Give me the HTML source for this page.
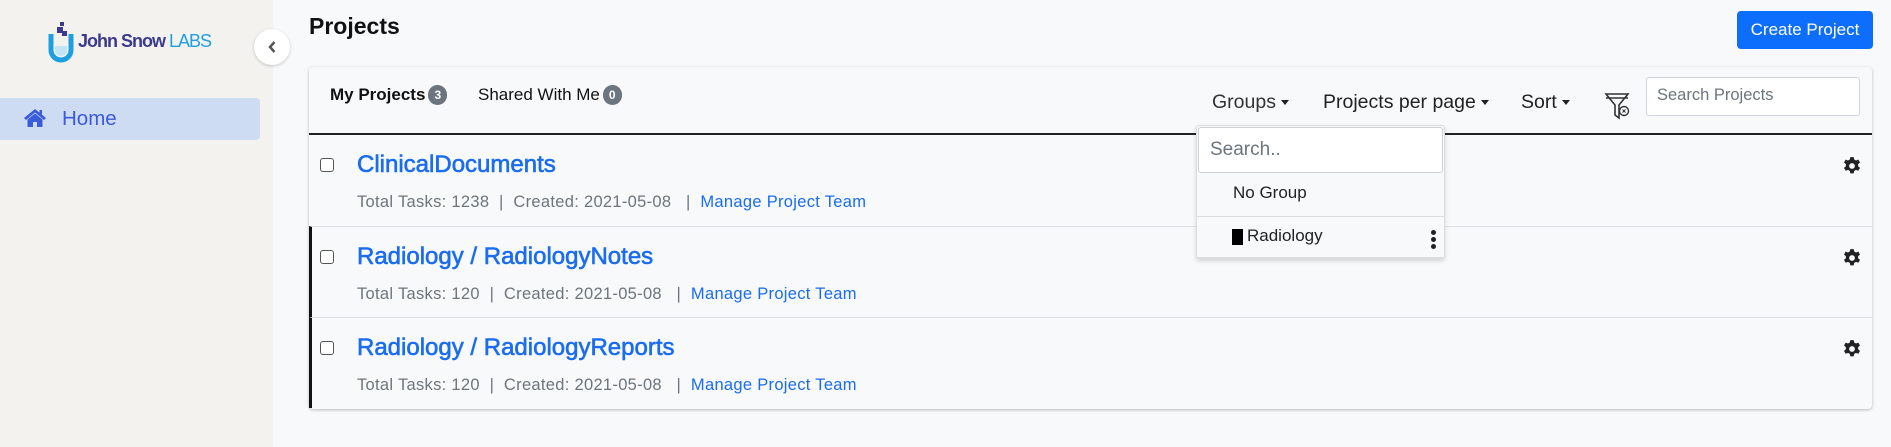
<!DOCTYPE html>
<html><head><style>
*{box-sizing:border-box;margin:0;padding:0}
body{width:1891px;height:447px;background:#f8f9fb;font-family:"Liberation Sans",sans-serif;position:relative;overflow:hidden}
.side{position:absolute;left:0;top:0;width:273px;height:447px;background:#f3f2ef}
.abs{position:absolute;white-space:nowrap}
.card{position:absolute;left:309px;top:67px;width:1563px;height:342px;background:#f8f9fa;border-radius:4px;box-shadow:0 1px 3px rgba(0,0,0,.25)}
.row{position:absolute;left:0;width:1563px;height:91px;border-top:1px solid #dee2e6}
.badge{display:inline-block;background:#6c757d;color:#fff;font-size:12px;font-weight:bold;border-radius:10px;padding:3px 6px;vertical-align:1px;margin-left:3px}
.cb{position:absolute;left:11px;top:23px;width:14px;height:14px;border:1px solid #555;border-radius:3px;background:#fff}
.title{position:absolute;left:48px;top:16px;font-size:24px;color:#1a6cf0;font-weight:normal;-webkit-text-stroke:0.6px #1a6cf0}
.meta{position:absolute;left:48px;top:58px;font-size:16.5px;color:#6c757d;letter-spacing:0.3px}
.meta a{color:#1a6cf0;text-decoration:none}
.gear{position:absolute;left:1533px;top:21px}
.caret{display:inline-block;border-left:4px solid transparent;border-right:4px solid transparent;border-top:5px solid #222;vertical-align:3px;margin-left:5px}
</style></head><body>
<div class="side">
<svg class="abs" style="left:48px;top:22px" width="26" height="41" viewBox="0 0 26 41"><rect x="12" y="0" width="4" height="4" fill="#3b3a8c"/><rect x="9" y="5" width="6" height="6" fill="#3b3a8c"/><rect x="14" y="9" width="5" height="5" fill="#3b3a8c"/><path d="M3 12 V28 a10 10 0 0 0 20 0 V12" fill="none" stroke="#1e9fe0" stroke-width="5"/><path d="M7 24 h12 v4 a6 6 0 0 1 -12 0z" fill="#bfe5f7"/></svg>
<div class="abs" style="left:78px;top:31px;font-size:18px;font-weight:bold;color:#3b3a8c;letter-spacing:-1px">John Snow <span style="color:#1e9fe0;font-weight:normal">LABS</span></div>
<div class="abs" style="left:0;top:98px;width:260px;height:42px;background:#cddcf2;border-radius:0 4px 4px 0"></div>
<svg class="abs" style="left:23px;top:108px" width="24" height="20" viewBox="0 0 24 20"><path d="M12 1 L1 10 L3 12 L12 4.5 L21 12 L23 10 L19 6.7 V2 H16.5 V4.6Z" fill="#3b5bdb"/><path d="M4.5 11.5 L12 5.5 L19.5 11.5 V19 H14 V14 H10 V19 H4.5Z" fill="#3b5bdb"/></svg>
<div class="abs" style="left:62px;top:107px;font-size:20.5px;color:#3b5bdb">Home</div>
</div>
<div class="abs" style="left:254px;top:29px;width:36px;height:36px;border-radius:50%;background:#fff;box-shadow:0 1px 3px rgba(0,0,0,.2)"></div>
<svg class="abs" style="left:267px;top:40px" width="10" height="14" viewBox="0 0 10 14"><path d="M7.5 2 L3 7 L7.5 12" fill="none" stroke="#555" stroke-width="2.5"/></svg>
<div class="abs" style="left:309px;top:13px;font-size:23px;font-weight:bold;color:#111">Projects</div>
<div class="abs" style="left:1737px;top:11px;width:136px;height:38px;background:#0d6efd;border-radius:4px;color:#fff;font-size:17px;text-align:center;line-height:38px">Create Project</div>
<div class="card">
<div class="abs" style="left:21px;top:18px;font-size:17px;font-weight:bold;color:#111">My Projects<span class="badge">3</span></div>
<div class="abs" style="left:169px;top:18px;font-size:17px;color:#111">Shared With Me<span class="badge">0</span></div>
<div class="abs" style="left:903px;top:24px;font-size:19.5px;color:#333">Groups<span class="caret"></span></div>
<div class="abs" style="left:1014px;top:24px;font-size:19.5px;color:#222">Projects per page<span class="caret"></span></div>
<div class="abs" style="left:1212px;top:24px;font-size:19.5px;color:#222">Sort<span class="caret"></span></div>
<svg class="abs" style="left:1295px;top:24px" width="28" height="30" viewBox="0 0 28 30"><path d="M2 3 H24 L15 14 V27 L11 24 V14Z M2 7 H24" fill="none" stroke="#333" stroke-width="1.6"/><circle cx="20" cy="20" r="4.5" fill="#fff" stroke="#333" stroke-width="1.4"/><path d="M18.5 18.5 l3 3 m0 -3 l-3 3" stroke="#333" stroke-width="1"/></svg>
<div class="abs" style="left:1337px;top:10px;width:214px;height:39px;background:#fff;border:1px solid #ced4da;border-radius:3px;font-size:16.5px;color:#6c757d;padding:8px 10px">Search Projects</div>
<div class="abs" style="left:0;top:66px;width:1563px;height:2px;background:#222"></div>
<div class="row" style="top:68px;border-top:none">
<div class="cb"></div><div class="title">ClinicalDocuments</div>
<div class="meta">Total Tasks: 1238 &nbsp;| &nbsp;Created: 2021-05-08 &nbsp; | &nbsp;<a>Manage Project Team</a></div>
<svg class="gear" width="20" height="20" viewBox="0 0 18 18"><path d="M7.5 1h3l.5 2.2 1.6.9 2.1-.8 1.5 2.6-1.7 1.5v1.8l1.7 1.5-1.5 2.6-2.1-.8-1.6.9-.5 2.2h-3l-.5-2.2-1.6-.9-2.1.8-1.5-2.6 1.7-1.5V7.4L1.8 5.9l1.5-2.6 2.1.8L7 3.2Z" fill="#222"/><circle cx="9" cy="9" r="2.6" fill="#f8f9fa"/></svg>
</div>
<div class="row" style="top:159px;border-left:3px solid #111">
<div class="cb" style="left:8px"></div><div class="title" style="left:45px">Radiology / RadiologyNotes</div>
<div class="meta" style="left:45px">Total Tasks: 120 &nbsp;| &nbsp;Created: 2021-05-08 &nbsp; | &nbsp;<a>Manage Project Team</a></div>
<svg class="gear" style="left:1530px" width="20" height="20" viewBox="0 0 18 18"><path d="M7.5 1h3l.5 2.2 1.6.9 2.1-.8 1.5 2.6-1.7 1.5v1.8l1.7 1.5-1.5 2.6-2.1-.8-1.6.9-.5 2.2h-3l-.5-2.2-1.6-.9-2.1.8-1.5-2.6 1.7-1.5V7.4L1.8 5.9l1.5-2.6 2.1.8L7 3.2Z" fill="#222"/><circle cx="9" cy="9" r="2.6" fill="#f8f9fa"/></svg>
</div>
<div class="row" style="top:250px;border-left:3px solid #111">
<div class="cb" style="left:8px"></div><div class="title" style="left:45px">Radiology / RadiologyReports</div>
<div class="meta" style="left:45px">Total Tasks: 120 &nbsp;| &nbsp;Created: 2021-05-08 &nbsp; | &nbsp;<a>Manage Project Team</a></div>
<svg class="gear" style="left:1530px" width="20" height="20" viewBox="0 0 18 18"><path d="M7.5 1h3l.5 2.2 1.6.9 2.1-.8 1.5 2.6-1.7 1.5v1.8l1.7 1.5-1.5 2.6-2.1-.8-1.6.9-.5 2.2h-3l-.5-2.2-1.6-.9-2.1.8-1.5-2.6 1.7-1.5V7.4L1.8 5.9l1.5-2.6 2.1.8L7 3.2Z" fill="#222"/><circle cx="9" cy="9" r="2.6" fill="#f8f9fa"/></svg>
</div>
</div>
<div class="abs" style="left:1196px;top:125px;width:249px;height:134px;background:#f8f9fa;border:1px solid #dcdcdc;border-radius:3px;box-shadow:0 2px 4px rgba(0,0,0,.15)">
<div class="abs" style="left:1px;top:1px;width:245px;height:46px;background:#fff;border:1px solid #d0d0d0;border-radius:3px;font-size:19px;color:#6c757d;padding:11px 11px">Search..</div>
<div class="abs" style="left:36px;top:57px;font-size:17px;color:#222">No Group</div>
<div class="abs" style="left:0;top:90px;width:247px;height:1px;background:#ddd"></div>
<div class="abs" style="left:35px;top:103px;width:11px;height:16px;background:#000"></div>
<div class="abs" style="left:50px;top:100px;font-size:17px;color:#222">Radiology</div>
<div class="abs" style="left:234px;top:104px;width:5px;height:5px;border-radius:50%;background:#222;box-shadow:0 7px 0 #222,0 14px 0 #222"></div>
<div class="abs" style="left:0;top:131px;width:247px;height:1px;background:#ddd"></div>
</div>
</body></html>
